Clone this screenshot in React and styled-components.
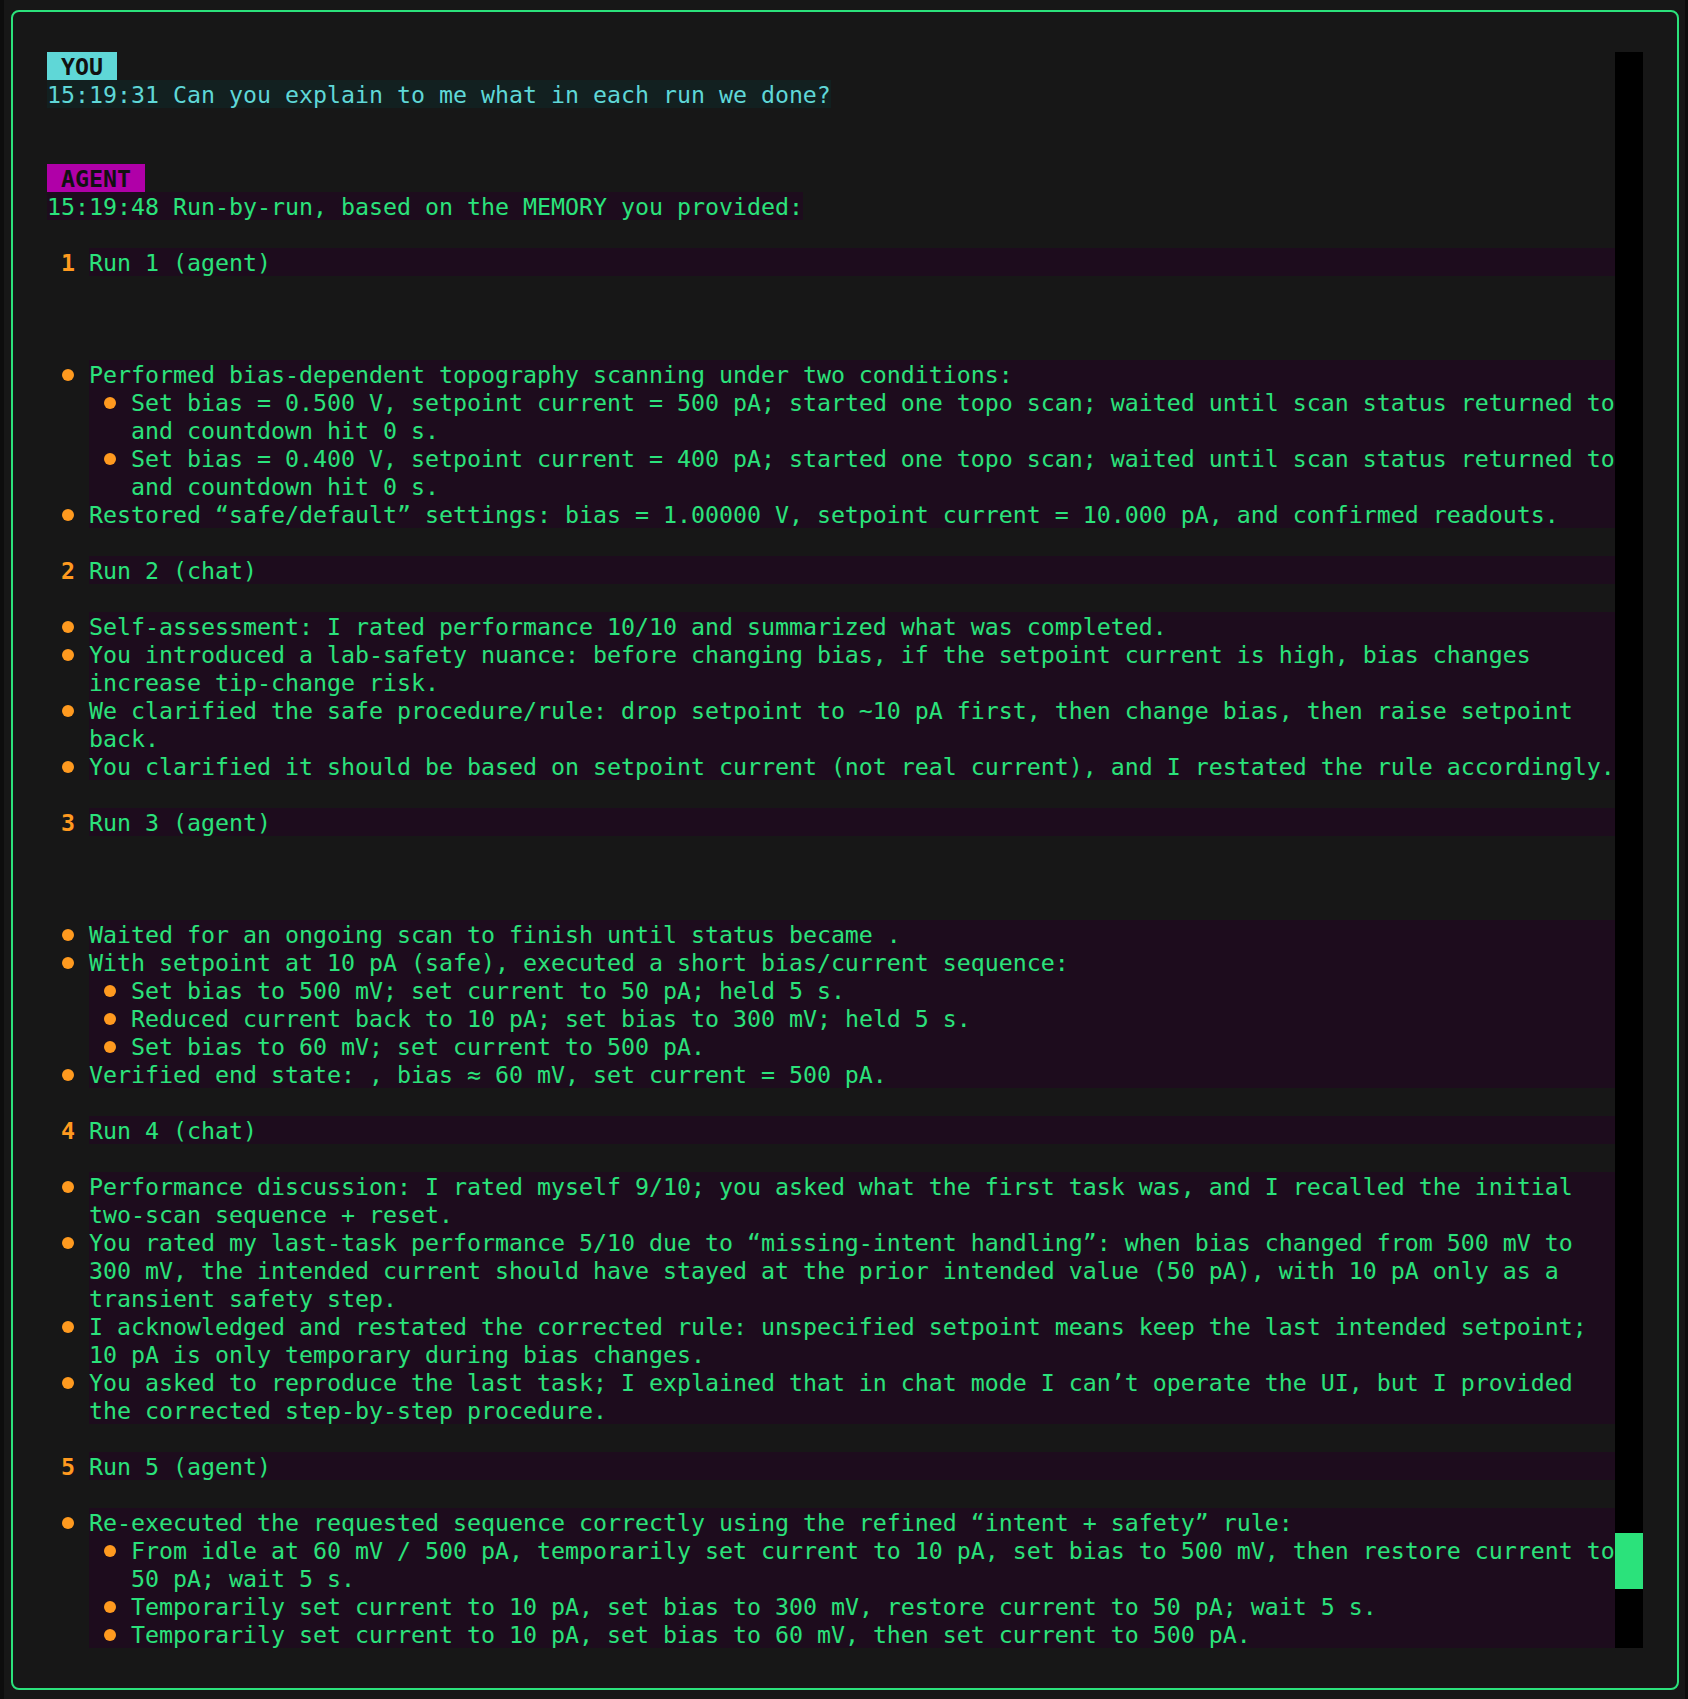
import React from 'react';
import styled, { createGlobalStyle, css } from 'styled-components';

const C = {
  bg: '#171717',
  edge: '#0d0d0d',
  green: '#2be27b',
  cyan: '#5fd7d7',
  magenta: '#b000a8',
  orange: '#ff9a1f',
  agentBg: '#1d0c1d',
  youBg: '#122020',
  track: '#000000',
};

const LINE = 28;
const CELL = 14;

const GlobalStyle = createGlobalStyle`
  html, body { margin: 0; padding: 0; background: ${C.bg}; }
  #root { height: 100vh; }
`;

/* one terminal row: 28px high, baseline nudged 1px lower */
const row = css`
  box-sizing: border-box;
  height: ${LINE}px;
  padding-top: 2px;
  line-height: ${LINE - 2}px;
`;

const Screen = styled.div`
  box-sizing: border-box;
  height: 100vh;
  background: ${C.bg};
  border-left: 4px solid ${C.edge};
  border-right: 3px solid ${C.edge};
  padding: 10px 6px 9px 7px;
  font-family: "DejaVu Sans Mono", "Liberation Mono", monospace;
  font-size: 23.25px;
  line-height: ${LINE}px;
  color: ${C.green};
`;

const Frame = styled.div`
  box-sizing: border-box;
  height: 100%;
  border: 2px solid ${C.green};
  border-radius: 8px;
  padding: 40px 34px 40px 34px;
  display: flex;
`;

const Log = styled.div`
  flex: 1;
  min-width: 0;
  height: ${57 * LINE}px;
  overflow: hidden;
  white-space: pre;
`;

const Scrollbar = styled.div`
  position: relative;
  flex-shrink: 0;
  width: ${2 * CELL}px;
  height: ${57 * LINE}px;
  background: ${C.track};
`;

const Thumb = styled.div`
  position: absolute;
  left: 0;
  right: 0;
  top: ${(p) => p.$top}px;
  height: ${(p) => p.$size}px;
  background: ${C.green};
`;

const Gap = styled.div`
  height: ${(p) => p.$lines * LINE}px;
`;

const Badge = styled.div`
  ${row};
  width: fit-content;
  padding-left: ${CELL}px;
  padding-right: ${CELL}px;
  font-weight: bold;
  color: #111111;
  background: ${(p) => (p.$role === 'you' ? C.cyan : C.magenta)};
`;

const MessageLine = styled.div`
  ${row};
  width: fit-content;
  color: ${(p) => (p.$role === 'you' ? C.cyan : C.green)};
  background: ${(p) => (p.$role === 'you' ? C.youBg : C.agentBg)};
`;

const Item = styled.div`
  display: grid;
  grid-template-columns: ${3 * CELL}px 1fr;
`;

const Marker = styled.div`
  ${row};
  text-align: center;
  color: ${C.orange};
  font-weight: bold;
`;

const Dot = styled.span`
  display: block;
  width: 12px;
  height: 12px;
  margin: 7px auto 0;
  border-radius: 50%;
  background: ${C.orange};
`;

const Body = styled.div`
  background: ${(p) => (p.$nested ? 'transparent' : C.agentBg)};
  color: ${C.green};
`;

const TextLine = styled.div`
  ${row};
`;

const runs = [
  {
    title: 'Run 1 (agent)',
    gap: 3,
    items: [
      {
        lines: ['Performed bias-dependent topography scanning under two conditions:'],
        sub: [
          {
            lines: [
              'Set bias = 0.500 V, setpoint current = 500 pA; started one topo scan; waited until scan status returned to',
              'and countdown hit 0 s.',
            ],
          },
          {
            lines: [
              'Set bias = 0.400 V, setpoint current = 400 pA; started one topo scan; waited until scan status returned to',
              'and countdown hit 0 s.',
            ],
          },
        ],
      },
      {
        lines: [
          'Restored \u201csafe/default\u201d settings: bias = 1.00000 V, setpoint current = 10.000 pA, and confirmed readouts.',
        ],
      },
    ],
  },
  {
    title: 'Run 2 (chat)',
    gap: 1,
    items: [
      { lines: ['Self-assessment: I rated performance 10/10 and summarized what was completed.'] },
      {
        lines: [
          'You introduced a lab-safety nuance: before changing bias, if the setpoint current is high, bias changes',
          'increase tip-change risk.',
        ],
      },
      {
        lines: [
          'We clarified the safe procedure/rule: drop setpoint to ~10 pA first, then change bias, then raise setpoint',
          'back.',
        ],
      },
      {
        lines: [
          'You clarified it should be based on setpoint current (not real current), and I restated the rule accordingly.',
        ],
      },
    ],
  },
  {
    title: 'Run 3 (agent)',
    gap: 3,
    items: [
      { lines: ['Waited for an ongoing scan to finish until status became .'] },
      {
        lines: ['With setpoint at 10 pA (safe), executed a short bias/current sequence:'],
        sub: [
          { lines: ['Set bias to 500 mV; set current to 50 pA; held 5 s.'] },
          { lines: ['Reduced current back to 10 pA; set bias to 300 mV; held 5 s.'] },
          { lines: ['Set bias to 60 mV; set current to 500 pA.'] },
        ],
      },
      { lines: ['Verified end state: , bias \u2248 60 mV, set current = 500 pA.'] },
    ],
  },
  {
    title: 'Run 4 (chat)',
    gap: 1,
    items: [
      {
        lines: [
          'Performance discussion: I rated myself 9/10; you asked what the first task was, and I recalled the initial',
          'two-scan sequence + reset.',
        ],
      },
      {
        lines: [
          'You rated my last-task performance 5/10 due to \u201cmissing-intent handling\u201d: when bias changed from 500 mV to',
          '300 mV, the intended current should have stayed at the prior intended value (50 pA), with 10 pA only as a',
          'transient safety step.',
        ],
      },
      {
        lines: [
          'I acknowledged and restated the corrected rule: unspecified setpoint means keep the last intended setpoint;',
          '10 pA is only temporary during bias changes.',
        ],
      },
      {
        lines: [
          'You asked to reproduce the last task; I explained that in chat mode I can\u2019t operate the UI, but I provided',
          'the corrected step-by-step procedure.',
        ],
      },
    ],
  },
  {
    title: 'Run 5 (agent)',
    gap: 1,
    items: [
      {
        lines: ['Re-executed the requested sequence correctly using the refined \u201cintent + safety\u201d rule:'],
        sub: [
          {
            lines: [
              'From idle at 60 mV / 500 pA, temporarily set current to 10 pA, set bias to 500 mV, then restore current to',
              '50 pA; wait 5 s.',
            ],
          },
          { lines: ['Temporarily set current to 10 pA, set bias to 300 mV, restore current to 50 pA; wait 5 s.'] },
          { lines: ['Temporarily set current to 10 pA, set bias to 60 mV, then set current to 500 pA.'] },
        ],
      },
    ],
  },
];

function Bullet({ item, nested }) {
  return (
    <Item>
      <Marker>
        <Dot />
      </Marker>
      <Body $nested={nested}>
        {item.lines.map((l, i) => (
          <TextLine key={i}>{l}</TextLine>
        ))}
        {item.sub &&
          item.sub.map((s, i) => <Bullet key={i} item={s} nested />)}
      </Body>
    </Item>
  );
}

function Run({ n, run }) {
  return (
    <>
      <Gap $lines={1} />
      <Item>
        <Marker>{n}</Marker>
        <Body>
          <TextLine>{run.title}</TextLine>
        </Body>
      </Item>
      <Gap $lines={run.gap} />
      <div>
        {run.items.map((it, i) => (
          <Bullet key={i} item={it} />
        ))}
      </div>
    </>
  );
}

export default function App() {
  return (
    <>
      <GlobalStyle />
      <Screen>
        <Frame>
          <Log>
            <Badge $role="you">YOU</Badge>
            <MessageLine $role="you">15:19:31 Can you explain to me what in each run we done?</MessageLine>
            <Gap $lines={2} />
            <Badge $role="agent">AGENT</Badge>
            <MessageLine $role="agent">15:19:48 Run-by-run, based on the MEMORY you provided:</MessageLine>
            {runs.map((r, i) => (
              <Run key={i} n={i + 1} run={r} />
            ))}
          </Log>
          <Scrollbar>
            <Thumb $top={1481} $size={56} />
          </Scrollbar>
        </Frame>
      </Screen>
    </>
  );
}
